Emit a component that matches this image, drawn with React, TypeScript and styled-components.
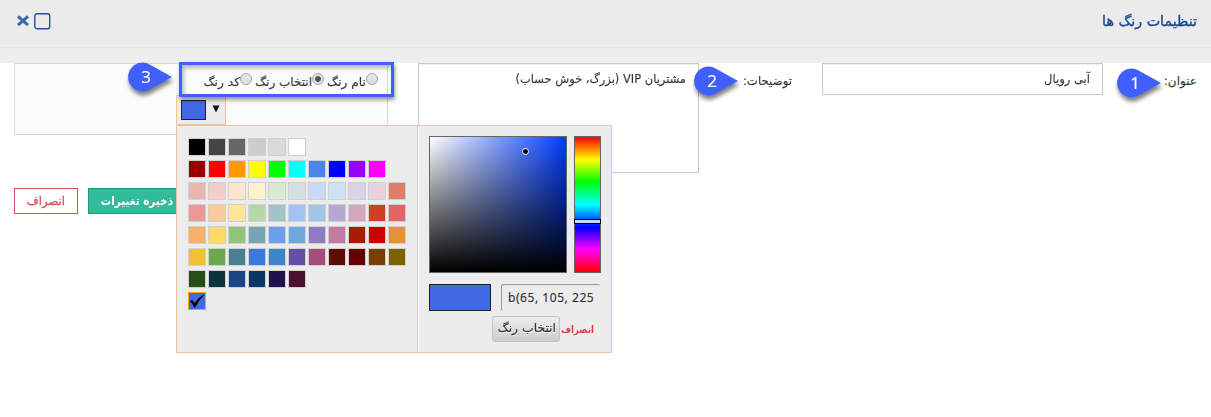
import React from "react";
import styled, { createGlobalStyle } from "styled-components";

const Global = createGlobalStyle`
  * { box-sizing: border-box; }
  body { margin: 0; background: #fff; }
`;

const faFont = `"DejaVu Sans", sans-serif`;

const Page = styled.div`
  direction: rtl;
  width: 100%;
  height: 417px;
  overflow: hidden;
  font-family: ${faFont};
  font-size: 12px;
  color: #3a3a3a;
  -webkit-text-stroke: 0.15px currentColor;
`;
const Header = styled.header`
  height: 48px;
  padding: 0 14px 5px 16px;
  display: flex;
  align-items: center;
  justify-content: space-between;
  background: #ebebeb;
  border-bottom: 1px solid #e3e3e3;
`;
const Strip = styled.div`
  height: 15px;
  background: #eeeeee;
`;
/* One line of text that occupies a fixed width, scaled to fit it. */
const Line = styled.span<{ $w: number; $scale?: number }>`
  display: inline-block;
  flex: none;
  width: ${(p) => p.$w}px;
  white-space: nowrap;
  transform: scaleX(${(p) => p.$scale ?? 1});
  transform-origin: right center;
`;
const Title = styled.h1`
  margin: 0;
  font-size: 14px;
  line-height: 20px;
  font-weight: 400;
  color: #174891;
  -webkit-text-stroke: 0.35px #174891;
`;
const WindowTools = styled.div`
  display: flex;
  direction: ltr;
  gap: 4px;
  svg { display: block; }
`;
const Form = styled.main`
  display: flex;
  align-items: flex-start;
  padding: 0 14px;
  height: 125px;
`;
const Label = styled.label<{ $w: number }>`
  width: ${(p) => p.$w}px;
  flex: none;
  padding-top: 10px;
  line-height: 17px;
`;
const Field = styled.div<{ $h: number }>`
  width: 281px;
  height: ${(p) => p.$h}px;
  flex: none;
  margin-left: 30px;
  padding: 7px 12px;
  line-height: 17px;
  border: 1px solid #c9c9c9;
  background: #fff;
  box-shadow: inset 0 1px 1px #f0f0f0;
`;
const ColorField = styled.section`
  position: relative;
  width: 374px;
  height: 72px;
  flex: none;
  border: 1px solid #d8d8d8;
  background: repeating-conic-gradient(#f9f9f9 0 25%, #fefefe 0 50%) 0 0 / 4px 4px;
`;
const Radios = styled.div`
  display: flex;
  align-items: flex-start;
  padding: 9px 9px 0 0;
`;
const Option = styled.label`
  display: flex;
  margin-left: 3px;
  line-height: 19px;
`;
const Dot = styled.i<{ $on?: boolean }>`
  width: 12px;
  height: 12px;
  flex: none;
  border-radius: 50%;
  border: 1px solid #a6a6a6;
  background: ${(p) =>
    p.$on
      ? "radial-gradient(circle, #555 0 2.5px, #e0e0e0 3.3px)"
      : "linear-gradient(#e6e6e6, #dcdcdc)"};
`;
const Highlight = styled.div`
  position: absolute;
  left: 164px;
  top: -2px;
  width: 215px;
  height: 35px;
  border: 3px solid #3f5fff;
  box-shadow: 1px 3px 4px rgba(0, 0, 0, 0.4), inset 2px 3px 4px rgba(0, 0, 0, 0.28);
  z-index: 3;
`;
const Picker = styled.div`
  position: absolute;
  left: 161px;
  top: 31px;
  direction: ltr;
  z-index: 2;
`;
const Trigger = styled.div`
  width: 50px;
  height: 30px;
  padding: 4px;
  display: flex;
  align-items: center;
  gap: 6px;
  border: 1px solid #f0c49b;
  background: #ececec;
  svg { margin-bottom: 2px; }
`;
const Preview = styled.div<{ $w: number; $h: number }>`
  width: ${(p) => p.$w}px;
  height: ${(p) => p.$h}px;
  flex: none;
  border: 1px solid #222;
  background: #4169e1;
`;
const Popup = styled.div`
  display: flex;
  width: 436px;
  height: 228px;
  border: 1px solid #f0c49b;
  background: #ececec;
`;
const Palette = styled.div`
  width: 241px;
  flex: none;
  padding: 12px 0 0 11px;
  display: flex;
  flex-direction: column;
  gap: 4px;
  border-right: 1px solid #ccc;
`;
const SwatchRow = styled.div`
  display: flex;
  gap: 2px;
`;
const Swatch = styled.div<{ $c: string; $sel?: boolean }>`
  width: 18px;
  height: 18px;
  border: 1px solid ${(p) => (p.$sel ? "#ffa500" : "#d0d0d0")};
  background: ${(p) => p.$c};
  svg { display: block; }
`;
const Mixer = styled.div`
  flex: 1;
  padding: 10px 10px 0;
  border-left: 1px solid #fff;
`;
const Sliders = styled.div`
  display: flex;
  gap: 7px;
`;
const Plane = styled.div`
  position: relative;
  width: 138px;
  height: 137px;
  border: 1px solid #666;
  background: linear-gradient(to top, #000, transparent),
    linear-gradient(to right, #fff, #003cff);
`;
const Handle = styled.div`
  position: absolute;
  left: 92px;
  top: 11px;
  width: 7px;
  height: 7px;
  border: 1px solid #fff;
  border-radius: 50%;
  background: #000;
`;
const Hue = styled.div`
  position: relative;
  width: 27px;
  height: 137px;
  border: 1px solid #666;
  background: linear-gradient(#f00, #ff0 17%, #0f0 33%, #0ff 50%, #00f 67%, #f0f 83%, #f00);
`;
const HueHandle = styled.div`
  position: absolute;
  left: -1px;
  top: 82px;
  width: 27px;
  height: 5px;
  border: 1px solid #000;
  background: #cbd8ff;
`;
const ValueRow = styled.div`
  display: flex;
  justify-content: space-between;
  padding-top: 11px;
  width: 171px;
`;
const Value = styled.div`
  width: 99px;
  height: 27px;
  padding: 0 0 0 6px;
  font: 12px/26px "Noto Sans", sans-serif;
  letter-spacing: 0.55px;
  color: #333;
  white-space: nowrap;
  border: solid #999;
  border-width: 1px 0 0 1px;
  border-radius: 3px 2px 0 2px;
`;
const PickerActions = styled.div`
  display: flex;
  direction: rtl;
  align-items: center;
  padding: 5px 7px 0 0;
`;
const Choose = styled.button`
  width: 68px;
  height: 26px;
  padding: 0 3px 3px;
  margin: 0 2px 0 0;
  direction: rtl;
  text-align: right;
  font: 12px/20px ${faFont};
  color: #333;
  text-shadow: 0 1px 0 #fff;
  border: 1px solid #c3c3c3;
  border-radius: 3px;
  background: linear-gradient(#eee, #ccc);
`;
const CancelLink = styled.a`
  color: #d93f3f;
  font-size: 10px;
  font-weight: 700;
  line-height: 20px;
  padding-top: 1px;
  -webkit-text-stroke: 0;
`;
const Buttons = styled.footer`
  display: flex;
  direction: ltr;
  gap: 10px;
  padding: 0 14px;
`;
const Button = styled.button<{ $solid?: boolean }>`
  width: ${(p) => (p.$solid ? 98 : 64)}px;
  height: 26px;
  padding: 0 12px 1px;
  direction: rtl;
  text-align: right;
  font: ${(p) => (p.$solid ? 700 : 400)} 12px/22px ${faFont};
  color: ${(p) => (p.$solid ? "#fff" : "#d9534f")};
  -webkit-text-stroke: ${(p) => (p.$solid ? 0 : 0.3)}px currentColor;
  border: 1px solid ${(p) => (p.$solid ? "#209a7b" : "#d9534f")};
  background: ${(p) => (p.$solid ? "#32bc9b" : "#fff")};
`;
const PinBox = styled.div<{ $x: number; $y: number }>`
  position: absolute;
  left: ${(p) => p.$x}px;
  top: ${(p) => p.$y}px;
  width: 44px;
  height: 30px;
  z-index: 4;
  direction: ltr;
  filter: drop-shadow(1px 4px 2px rgba(0, 0, 0, 0.5));
  svg { position: absolute; inset: 0; }
`;
const PinNumber = styled.span`
  position: relative;
  display: block;
  width: 36px;
  text-align: center;
  font: 17px/30px "Open Sans", sans-serif;
  color: #fff;
`;

const Pin = ({ n, x, y }: { n: number; x: number; y: number }) => (
  <PinBox $x={x} $y={y}>
    <svg width="44" height="30" viewBox="0 0 44 30">
      <path d="M44 15 L22 2.7 A14.4 14.4 0 1 0 22 27.3 Z" fill="#3f5fff" />
    </svg>
    <PinNumber>{n}</PinNumber>
  </PinBox>
);

const palette = [
  "000000 444444 666666 cccccc d9d9d9 ffffff",
  "980000 ff0000 ff9900 ffff00 00ff00 00ffff 4a86e8 0000ff 9900ff ff00ff",
  "e6b8af f4cccc fce5cd fff2cc d9ead3 d0e0e3 c9daf8 cfe2f3 d9d2e9 ead1dc dd7e6b",
  "ea9999 f9cb9c ffe599 b6d7a8 a2c4c9 a4c2f4 9fc5e8 b4a7d6 d5a6bd cc4125 e06666",
  "f6b26b ffd966 93c47d 76a5af 6d9eeb 6fa8dc 8e7cc3 c27ba0 a61c00 cc0000 e69138",
  "f1c232 6aa84f 45818e 3c78d8 3d85c6 674ea7 a64d79 5b0f00 660000 783f04 7f6000",
  "274e13 0c343d 1c4587 073763 20124d 4c1130",
].map((row) => row.split(" "));

export default function App() {
  return (
    <Page>
      <Global />
      <Header>
        <Title><Line $w={95} $scale={1.02}>تنظیمات رنگ ها</Line></Title>
        <WindowTools>
          <svg width="14" height="16" viewBox="0 0 14 16">
            <path d="M2 3.3 L12 12.2 M12 3.3 L2 12.2" stroke="#3e68a8" strokeWidth="3" />
          </svg>
          <svg width="17" height="17" viewBox="0 0 17 17">
            <rect x=".8" y=".8" width="14.9" height="14.9" rx="2.2" fill="none" stroke="#22539a" strokeWidth="1.4" />
          </svg>
        </WindowTools>
      </Header>
      <Strip />
      <Form>
        <Label $w={94}><Line $w={33}>عنوان:</Line></Label>
        <Field $h={32}><Line $w={46} $scale={0.96}>آبی رویال</Line></Field>
        <Label $w={93}><Line $w={49} $scale={0.98}>توضیحات:</Line></Label>
        <Field $h={110}><Line $w={170} $scale={0.955}>مشتریان VIP (بزرگ، خوش حساب)</Line></Field>
        <ColorField>
          <Radios>
            <Option><Dot /><Line $w={39} $scale={1.02}>نام رنگ</Line></Option>
            <Option><Dot $on /><Line $w={57}>انتخاب رنگ</Line></Option>
            <Option><Dot /><Line $w={38} $scale={1.02}>کد رنگ</Line></Option>
          </Radios>
          <Picker>
            <Trigger>
              <Preview $w={25} $h={20} />
              <svg width="8" height="8" viewBox="0 0 8 8"><path d="M.5 .5 H7.5 L4 7.5Z" fill="#111" /></svg>
            </Trigger>
            <Popup>
              <Palette>
                {palette.map((row) => (
                  <SwatchRow key={row[0]}>
                    {row.map((c) => <Swatch key={c} $c={`#${c}`} />)}
                  </SwatchRow>
                ))}
                <Swatch $c="#4169e1" $sel>
                  <svg width="16" height="16" viewBox="0 0 16 16">
                    <path d="M.8 8 L3.2 7 L5.6 10 Q9 4.5 14.8 1.5 L15 2.3 Q10 7 6.2 14.5 L5.2 14.5 Q3.5 10.5 .8 8Z" />
                  </svg>
                </Swatch>
              </Palette>
              <Mixer>
                <Sliders>
                  <Plane><Handle /></Plane>
                  <Hue><HueHandle /></Hue>
                </Sliders>
                <ValueRow>
                  <Preview $w={62} $h={27} />
                  <Value>b(65, 105, 225</Value>
                </ValueRow>
                <PickerActions>
                  <CancelLink><Line $w={32} $scale={0.86}>انصراف</Line></CancelLink>
                  <Choose><Line $w={59} $scale={1.03}>انتخاب رنگ</Line></Choose>
                </PickerActions>
              </Mixer>
            </Popup>
          </Picker>
          <Highlight />
        </ColorField>
      </Form>
      <Buttons>
        <Button><Line $w={38} $scale={0.97}>انصراف</Line></Button>
        <Button $solid><Line $w={72} $scale={0.87}>ذخیره تغییرات</Line></Button>
      </Buttons>
      <Pin n={1} x={1117} y={68} />
      <Pin n={2} x={694} y={66} />
      <Pin n={3} x={128} y={62} />
    </Page>
  );
}
